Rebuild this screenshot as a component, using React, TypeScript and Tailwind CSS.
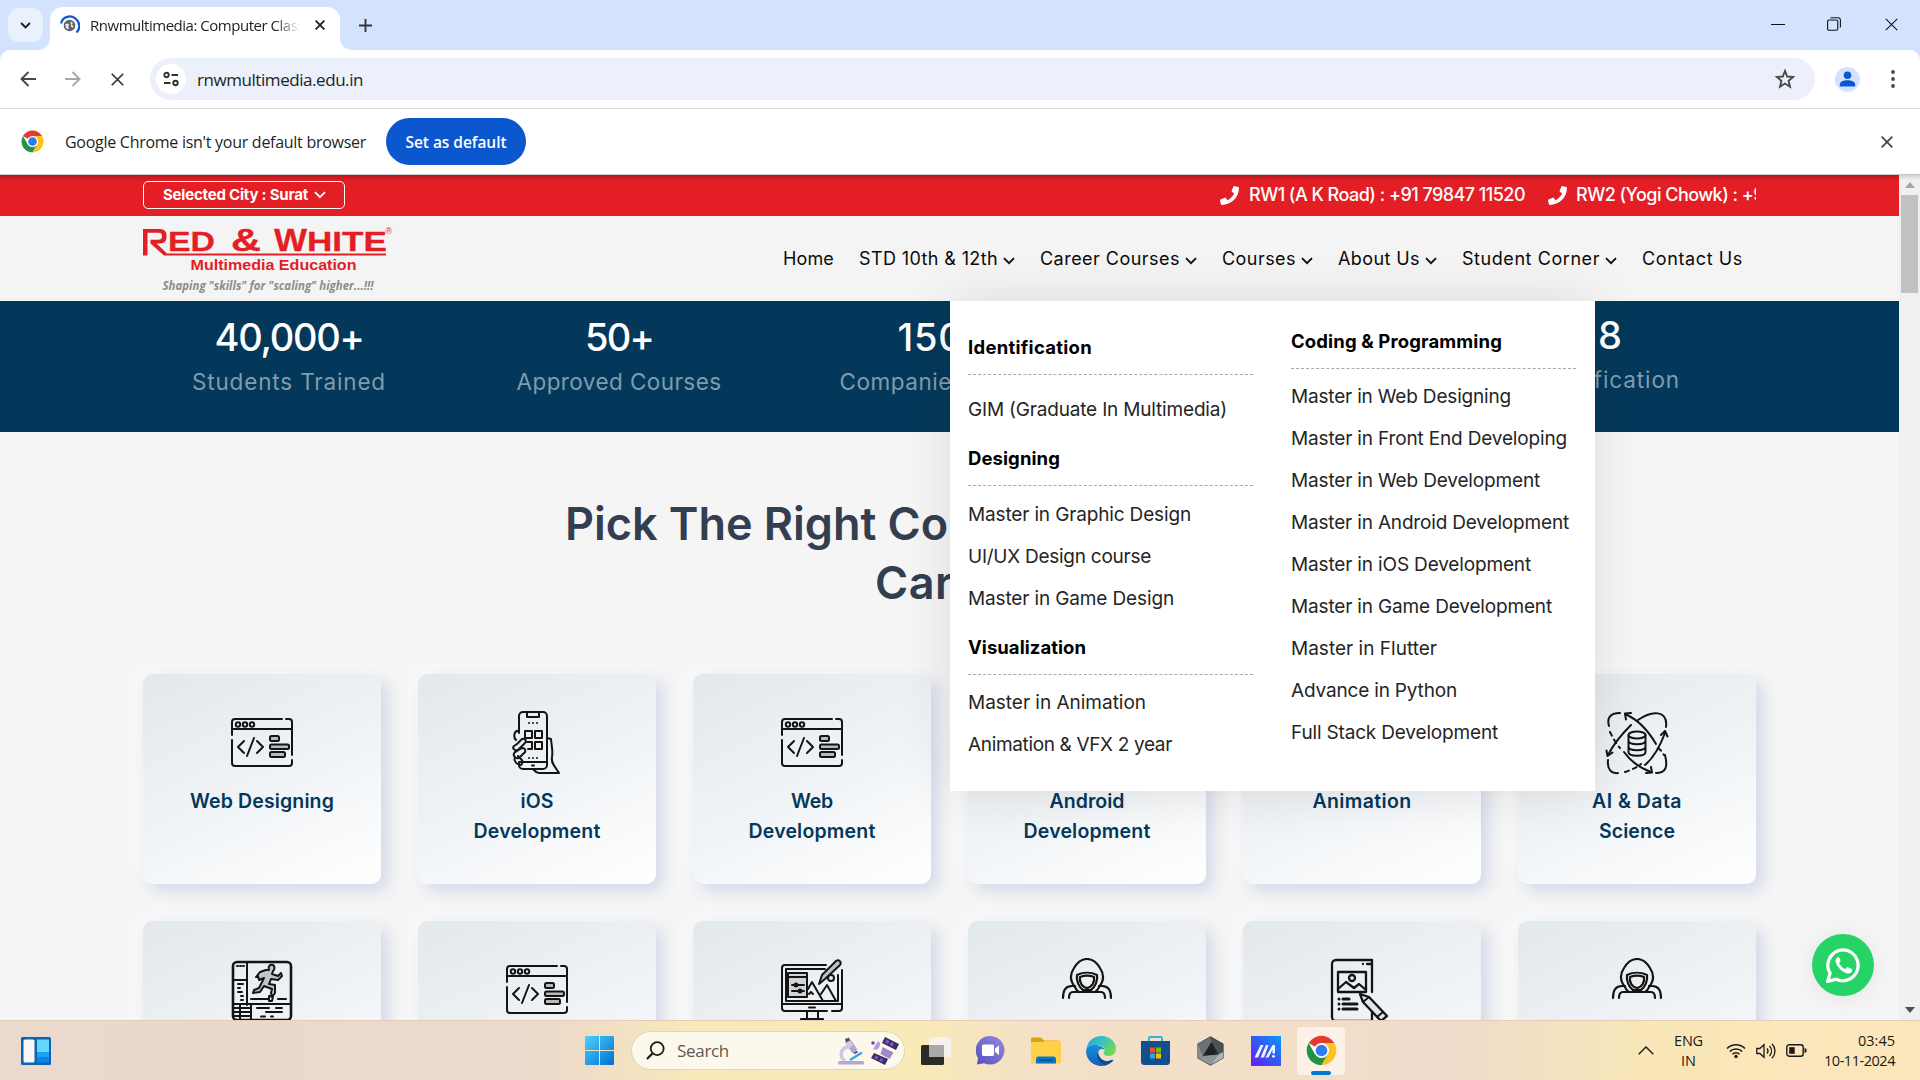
import { useLayoutEffect, useRef, type ReactNode } from "react";

/** Single line of text whose tracking is adjusted until it spans `w` pixels. */
function Fit({ w, className = "", children }: { w: number; className?: string; children: string }) {
  const ref = useRef<HTMLSpanElement>(null);
  useLayoutEffect(() => {
    const el = ref.current;
    if (!el) return;
    el.style.letterSpacing = "0px";
    const natural = el.getBoundingClientRect().width;
    el.style.letterSpacing = `${(w - natural) / children.length}px`;
  }, [w, children]);
  return (
    <span ref={ref} className={`inline-block whitespace-pre ${className}`}>
      {children}
    </span>
  );
}

const Chevron = ({ className = "" }: { className?: string }) => (
  <svg viewBox="0 0 12 8" className={className} fill="none" stroke="currentColor" strokeWidth="1.8">
    <path d="M1 1.2l5 5 5-5" />
  </svg>
);

const Cross = ({ className = "", sw = 2 }: { className?: string; sw?: number }) => (
  <svg viewBox="0 0 12 12" className={className} fill="none" stroke="currentColor" strokeWidth={sw}>
    <path d="M0.7 0.7l10.6 10.6M11.3 0.7L0.7 11.3" />
  </svg>
);

const ChromeLogo = ({ className = "" }: { className?: string }) => (
  <svg viewBox="0 0 48 48" className={className}>
    <circle cx="24" cy="24" r="23" fill="#fff" />
    <path d="M24 24L4.1 12.5A23 23 0 0 1 43.9 12.5H24z" fill="#e33b2e" />
    <path d="M4.1 12.5A23 23 0 0 0 24 47L34 29.7 24 24 14 29.7z" fill="#229342" />
    <path d="M43.9 12.5A23 23 0 0 1 24 47l10-17.3-10-17.2z" fill="#fcc31e" />
    <circle cx="24" cy="24" r="11.6" fill="#fff" />
    <circle cx="24" cy="24" r="9" fill="#2f7cf0" />
  </svg>
);

function TabStrip() {
  return (
    <div className="flex h-[50px] shrink-0 items-stretch bg-[#d3e3fd]">
      <div className="flex w-[50px] shrink-0 items-center">
        <div className="ml-2 flex h-[34px] w-[35px] items-center justify-center rounded-[11px] bg-[#e9f0fe]">
          <svg viewBox="0 0 12 8" className="h-[7px] w-[11px]" fill="none" stroke="#1f1f1f" strokeWidth="2.2">
            <path d="M1 1.2l5 5 5-5" />
          </svg>
        </div>
      </div>
      <div className="relative mt-[7px] flex w-[290px] items-center rounded-t-[13px] bg-white pb-[7px]">
        <svg viewBox="0 0 12 12" className="absolute bottom-0 -left-3 size-3">
          <path d="M12 0v12H0A12 12 0 0 0 12 0z" fill="#fff" />
        </svg>
        <svg viewBox="0 0 12 12" className="absolute -right-3 bottom-0 size-3">
          <path d="M0 0v12h12A12 12 0 0 1 0 0z" fill="#fff" />
        </svg>
        <svg viewBox="0 0 20 20" className="ml-[10px] size-5">
          <circle cx="9.5" cy="10.5" r="5.8" fill="#5f6368" />
          <path d="M5.200 9l2.600-.5 1.500 1.500-1.300 1.500 1 1.500-1 1.500-2-1.500zM10.500 6.500l2.500 1.500-1.500 2 2 .5-1 2.500-1.500-1.500z" fill="#e8eaed" />
          <path d="M1 8.500A9 9 0 0 1 16 4a9 9 0 0 1 .5 13.500" fill="none" stroke="#0b57d0" strokeWidth="2.200" />
        </svg>
        <div className="ml-[10px] w-[212px] overflow-hidden [mask-image:linear-gradient(90deg,#000_185px,transparent_210px)]">
          <Fit w={214} className="font-['Open_Sans',sans-serif] text-[15px] leading-5 text-[#1f1f1f]">
            Rnwmultimedia: Computer Class
          </Fit>
        </div>
        <Cross className="ml-[13px] size-[10px] text-[#1f1f1f]" sw={2.2} />
      </div>
      <div className="flex w-[50px] items-center justify-center">
        <svg viewBox="0 0 14 14" className="size-[13px]" stroke="#333" strokeWidth="2">
          <path d="M7 0v14M0 7h14" />
        </svg>
      </div>
      <div className="ml-auto flex items-center pb-[2px] text-[#111]">
        <svg viewBox="0 0 14 14" className="size-[14px]" stroke="currentColor">
          <path d="M0 7.5h14" />
        </svg>
        <svg viewBox="0 0 14 14" className="ml-[42px] size-[14px]" fill="none" stroke="currentColor" strokeWidth="1.1">
          <rect x=".6" y="3" width="10.200" height="10.200" rx="1.500" />
          <path d="M3.500.8h7.500a2.400 2.400 0 0 1 2.400 2.400v7.300" />
        </svg>
        <Cross className="mr-[22px] ml-[44px] size-[13px]" sw={1} />
      </div>
    </div>
  );
}

function Toolbar() {
  return (
    <div className="shrink-0 bg-[#d3e3fd]">
      <div className="flex h-[59px] items-center rounded-t-[10px] border-b border-[#dcdcdc] bg-white">
        <svg viewBox="0 0 16 16" className="ml-5 size-4" fill="none" stroke="#474747" strokeWidth="1.900">
          <path d="M8.500 1L1.500 8l7 7M1.500 8H16" />
        </svg>
        <svg viewBox="0 0 16 16" className="ml-[29px] size-4" fill="none" stroke="#a8a8a8" strokeWidth="1.900">
          <path d="M7.500 1l7 7-7 7M14.500 8H0" />
        </svg>
        <Cross className="ml-[30px] size-[13px] text-[#333]" sw={1.6} />
        <div className="ml-[26px] flex h-[42px] w-[1665px] items-center rounded-full bg-[#ebf0fa]">
          <div className="ml-[6px] flex size-[30px] items-center justify-center rounded-full bg-white">
            <svg viewBox="0 0 16 16" className="size-4" fill="none" stroke="#303030" strokeWidth="1.900">
              <circle cx="3.500" cy="4" r="2.200" />
              <path d="M8.500 4H15M1 12h6.500" />
              <circle cx="12.500" cy="12" r="2.200" />
            </svg>
          </div>
          <Fit w={166} className="ml-[11px] pt-px font-['Open_Sans',sans-serif] text-[17px] leading-6 text-[#1f1f1f]">
            rnwmultimedia.edu.in
          </Fit>
          <svg viewBox="0 0 24 24" className="mr-[19px] ml-auto size-[22px]" fill="none" stroke="#474747" strokeWidth="2">
            <path d="M12 3.200l2.400 6.100 6.500.5-5 4.200 1.600 6.400L12 16.900l-5.500 3.500 1.600-6.400-5-4.200 6.500-.5z" />
          </svg>
        </div>
        <svg viewBox="0 0 25 25" className="ml-5 size-[25px]">
          <circle cx="12.500" cy="12.500" r="12.500" fill="#d3e3fd" />
          <circle cx="12.500" cy="8.300" r="3.800" fill="#0b57d0" />
          <path d="M4.800 19.500v-2c0-3 4-4.200 7.700-4.200s7.700 1.200 7.700 4.200v2z" fill="#0b57d0" />
        </svg>
        <svg viewBox="0 0 4 18" className="ml-[31px] h-[18px] w-1" fill="#474747">
          <circle cx="2" cy="2" r="1.900" />
          <circle cx="2" cy="9" r="1.900" />
          <circle cx="2" cy="16" r="1.900" />
        </svg>
      </div>
    </div>
  );
}

function InfoBar() {
  return (
    <div className="flex h-[66px] shrink-0 items-center border-b border-[#c9c9c9] bg-white font-['Open_Sans',sans-serif]">
      <ChromeLogo className="ml-[21px] size-[23px]" />
      <Fit w={301} className="ml-[21px] text-[16px] leading-6 text-[#1f1f1f]">
        Google Chrome isn't your default browser
      </Fit>
      <div className="ml-5 flex h-[47px] w-[140px] items-center justify-center rounded-full bg-[#0b57d0]">
        <Fit w={101} className="text-[15.5px] leading-6 font-semibold text-white">
          Set as default
        </Fit>
      </div>
      <Cross className="mr-[27px] ml-auto size-[12px] text-[#444]" sw={1.700} />
    </div>
  );
}

const Phone = () => (
  <svg viewBox="0 0 512 512" className="size-[19px] shrink-0" fill="currentColor">
    <path d="M493.400 24.600l-104-24c-11.300-2.600-22.900 3.300-27.500 13.900l-48 112c-4.200 9.800-1.400 21.300 6.900 28l60.600 49.600c-36 76.700-98.900 140.500-177.200 177.200l-49.600-60.600c-6.800-8.300-18.200-11.100-28-6.900l-112 48C3.900 366.500-2 378.100.6 389.400l24 104C27.100 504.200 36.700 512 48 512c256.100 0 464-207.500 464-464 0-11.200-7.700-20.900-18.600-23.400z" />
  </svg>
);

function TopBar() {
  return (
    <div className="flex h-[41px] shrink-0 items-center bg-[#e31e25] bg-[linear-gradient(#0003,transparent_6px)] pb-px pl-[143px] text-white">
      <div className="flex h-[28px] w-[202px] items-center rounded-[5px] border border-white pl-[19px]">
        <Fit w={145} className="text-[15px] leading-5 font-bold">Selected City : Surat</Fit>
        <Chevron className="ml-[6px] h-[8px] w-[12px]" />
      </div>
      <div className="ml-[875px] flex w-[536px] items-center overflow-hidden text-[18px] leading-6 font-medium">
        <Phone />
        <Fit w={276} className="mr-[23px] ml-[10px] shrink-0">RW1 (A K Road) : +91 79847 11520</Fit>
        <Phone />
        <Fit w={188} className="ml-[9px] shrink-0">RW2 (Yogi Chowk) : +9</Fit>
      </div>
    </div>
  );
}

function Logo() {
  return (
    <svg viewBox="0 0 260 70" className="h-[70px] w-[260px]" fill="#e31e25">
      <g className="font-['Liberation_Sans',Arial,sans-serif]" stroke="#e31e25" strokeWidth=".3">
        <text x="25" y="25" fontSize="27" fontWeight="bold" textLength="47" lengthAdjust="spacingAndGlyphs">ED</text>
        <text x="88" y="25" fontSize="31" fontWeight="bold" textLength="30" lengthAdjust="spacingAndGlyphs">&amp;</text>
        <text x="131" y="25" fontSize="31" fontWeight="bold" textLength="33" lengthAdjust="spacingAndGlyphs">W</text>
        <text x="164" y="25" fontSize="27" fontWeight="bold" textLength="80" lengthAdjust="spacingAndGlyphs">HITE</text>
      </g>
      <path d="M0 3h17q6.500 0 6.500 6.500v1.500q0 6.500-6.500 6.500h-3.500l10.500 10H243v2H21L7.500 17.500v-3.800H15.500q3.500 0 3.500-3v-1q0-3-3.500-3H4.500V29.500H0z" />
      <text x="242.500" y="8" fontSize="9" className="font-['Liberation_Sans',Arial,sans-serif]">®</text>
      <text x="47.500" y="44" fontSize="14.600" fontWeight="bold" textLength="166" lengthAdjust="spacingAndGlyphs" className="font-['Liberation_Sans',Arial,sans-serif]">Multimedia Education</text>
      <text x="19.500" y="63.500" fontSize="12.500" fontWeight="700" fontStyle="italic" fill="#8c8c8c" textLength="211" lengthAdjust="spacingAndGlyphs" className="font-['Open_Sans',sans-serif]">Shaping "skills" for "scaling" higher...!!!</text>
    </svg>
  );
}

const navItems = [
  { label: "Home", w: 51, menu: false },
  { label: "STD 10th & 12th", w: 139, menu: true },
  { label: "Career Courses", w: 140, menu: true },
  { label: "Courses", w: 74, menu: true },
  { label: "About Us", w: 82, menu: true },
  { label: "Student Corner", w: 138, menu: true },
  { label: "Contact Us", w: 101, menu: false },
];

function Header() {
  return (
    <div className="flex h-[85px] shrink-0 bg-[#f4f4f4] pl-[143px]">
      <div className="mt-[10px]">
        <Logo />
      </div>
      <div className="ml-[380px] flex items-center gap-[25px] text-[18px] leading-6 text-[#0b0b0b]">
        {navItems.map((n) => (
          <div key={n.label} className="flex items-center">
            <Fit w={n.w}>{n.label}</Fit>
            {n.menu && <Chevron className="mt-[5px] ml-[5px] h-[8px] w-[12px]" />}
          </div>
        ))}
      </div>
    </div>
  );
}

function Stat({ value, vw, label, lw, raised = false }: { value: string; vw: number; label: string; lw: number; raised?: boolean }) {
  return (
    <div className={`flex w-[330px] flex-col items-center ${raised ? "pt-[14px]" : "pt-4"}`}>
      <Fit w={vw} className="text-[38px] leading-10 font-medium text-white">{value}</Fit>
      <Fit w={lw} className="mt-[10px] text-[22.5px] leading-[30px] text-[#7f9cac]">{label}</Fit>
    </div>
  );
}

function Stats() {
  return (
    <div className="flex h-[131px] shrink-0 bg-[#04385a] pl-[124px]">
      <Stat value="40,000+" vw={149} label="Students Trained" lw={194} />
      <Stat value="50+" vw={68} label="Approved Courses" lw={205} />
      <Stat value="150+ " vw={103} label="Companies Tied Up" lw={219} />
      <div className="w-[330px]" />
      <Stat value="8" vw={22} label="Certification" lw={142} raised />
    </div>
  );
}

/* ---------- Course icons, 64px grid ---------- */

const Icon = ({ children, sw = 2 }: { children: ReactNode; sw?: number }) => (
  <svg viewBox="0 0 64 64" className="size-16" fill="none" stroke="#141414" strokeWidth={sw} strokeLinejoin="round" strokeLinecap="round">
    {children}
  </svg>
);

const CodeIcon = () => (
  <Icon>
    <path d="M52 8H5a3 3 0 0 0-3 3v13M2 29v23a3 3 0 0 0 3 3h54a3 3 0 0 0 3-3v-3M62 44V11a3 3 0 0 0-3-3h-3M2 18h60" />
    <circle cx="8" cy="13.500" r="2.200" />
    <circle cx="15" cy="13.500" r="2.200" />
    <circle cx="22" cy="13.500" r="2.200" />
    <path d="M14 30l-6 6 6 6M27 30l6 6-6 6M24 27l-7 18" />
    <g fill="#b8bbbd">
      <rect x="40" y="25" width="9" height="5" rx="1.500" />
      <rect x="40" y="33.500" width="19" height="4.500" rx="1.500" />
      <rect x="40" y="41" width="15" height="5" rx="1.500" />
    </g>
  </Icon>
);

const PhoneAppIcon = () => (
  <Icon>
    <path d="M14 22V5a4 4 0 0 1 4-4h20a4 4 0 0 1 4 4v49a4 4 0 0 1-4 4H18a4 4 0 0 1-4-4v-2M14 51h28M22 1v5h12V1" />
    <path d="M20 20h7v7h-7zM30 20h7v7h-7zM30 31h7v7h-7zM23 38h4v-7h-5" />
    <path d="M24 12h0M28 12h0M32 12h0M24 47h0M28 47h0M32 47h0M27 54.500h2" />
    <path d="M14 20c-5-1-6 6-3 9M12 33l5-5c3-1 5 2 3 4l-7 7c-4 1-6-2-4-4zM12 40l5-3c4 0 4 4 2 5l-5 5c-4 1-7-3-4-6zM10 46c-2 5 3 8 6 8 2-2 2-4 0-6l-3-3" />
    <path d="M42 27l4 1c1 10 2 12 1 18-1 5 2 9 5 13l2 3H34c-3 0-4-2-6-4" />
  </Icon>
);

const DataIcon = () => (
  <Icon>
    <path d="M15 2C4 2 2 8 4 15M33 9c14-10 30-10 28 7M60 22C54 38 46 49 40 54M26 14C16 24 8 34 3 44M20 3c14 6 24 18 31 30" />
    <path d="M46 61C32 56 24 48 19 41M3 49c-1 9 3 14 10 13M60 44c3 12 1 18-9 18" />
    <path d="M2.500 45l-1-5.500M2.500 45l5-3.500M20 2.500l1 6M20 2.500l6-.5M47 61.500l-1-5.500M47 61.500l-6 .5M60 20l-4 4M60 20l2.500 5.500" />
    <path d="M5 21c3 6 6 12 10 16M20 61c6-2 11-4 16-8M53 37c3 2 4 4 6 7" strokeDasharray="4 4.500" />
    <ellipse cx="32" cy="24" rx="8.500" ry="3.500" />
    <path d="M23.500 24v17c0 5 17 5 17 0V24M23.500 29.500c0 5 17 5 17 0M23.500 35.500c0 5 17 5 17 0" />
  </Icon>
);

const AnimatorIcon = () => (
  <Icon>
    <rect x="3" y="4" width="58" height="58" rx="4" strokeWidth="2.600" />
    <path d="M17 4v43M3 22h14M3 46h58M21 46v16M3 50h18M3 54h18M3 58h18M10 46v16" />
    <path d="M7 8h1M10 8h1M13 8h1M8 26h5M8 30h2M8 34h4M11 38h2M11 42h2M21 41h17M48 41h8M27 50h12M46 50h6M36 54h16M31 58.500h4M41 58.500h2" />
    <path d="M39 12c-1-4 1-6 4-5 2 1 2 4 0 6l-1 3 6 2 3-3 1 3-4 4-7-1-2 5 6 1v8l-3 4-1-4 1-4-8-3-4 6-7 1 1-3 5-2 5-10-5 2-1-4-2 1 4-5 6-2z" fill="#c2c5c7" />
    <path d="M39 38l4 .5-1 4.500h-3z" />
  </Icon>
);

const MonitorIcon = () => (
  <Icon>
    <path d="M46 7H5a3 3 0 0 0-3 3v40a3 3 0 0 0 3 3h42M52 53h7a3 3 0 0 0 3-3V12M2 46h60M29 49.500h6M27 53v8M38 53v8M21 61h22v3H21z" />
    <path d="M45 11H6v32h52V17" />
    <path d="M8 15h19v24H8zM8 19h19M12 27h12M12 33h12" fill="#d2d5d7" />
    <circle cx="16" cy="27" r="1.500" fill="#141414" />
    <circle cx="20" cy="33" r="1.500" fill="#141414" />
    <path d="M28 31l4-7 11 19M29 36l2-2 2 2M41 36l6-9 9 16" />
    <path d="M39 26l3-9L56 3c3-2 6 1 4 4L45 21z" fill="#bfc2c4" />
    <circle cx="51" cy="20" r="3" />
  </Icon>
);

const HackerIcon = () => (
  <Icon sw={2.200}>
    <path d="M8 40c0-8 3-12 9-12h3M56 40c0-8-3-12-9-12h-3M14 40c0-4 1-6 4-6h28c3 0 4 2 4 6" />
    <path d="M20 29c-5-6-5-13-1-19C22 5 27 1 32 1s10 4 13 9c4 6 4 13-1 19" />
    <path d="M22 17c6-3 14-3 20 0 1 6-2 12-6 15h-8c-4-3-7-9-6-15z" />
    <path d="M25 19c4-1.500 10-1.500 14 0 1 5-2 10-7 11-5-1-8-6-7-11z" />
    <path d="M20 29c1 3 2 4 4 5M44 29c-1 3-2 4-4 5" />
  </Icon>
);

const DesignDocIcon = () => (
  <Icon sw={2.300}>
    <path d="M42 34V2H6a4 4 0 0 0-4 4v53a4 4 0 0 0 4 4h36V50M33 6h0M37 6h5" />
    <path d="M8 14h28v20H8z" />
    <circle cx="22" cy="20" r="3" />
    <path d="M8 31l8-7 8 6 5-4 7 6" />
    <path d="M9 41h0M13 41h6M9 46h0M13 46h14M9 51h0M13 51h14" strokeWidth="3" />
    <path d="M30 36l9 3 18 19-6 5L33 44z" fill="#e3e7ea" />
    <path d="M33 44l6-5M47 59l6-5" strokeWidth="1.800" />
  </Icon>
);

type Course = { icon: ReactNode; lines: { t: string; w: number }[] };

const topCourses: Course[] = [
  { icon: <CodeIcon />, lines: [{ t: "Web Designing", w: 144 }] },
  { icon: <PhoneAppIcon />, lines: [{ t: "iOS", w: 33 }, { t: "Development", w: 127 }] },
  { icon: <CodeIcon />, lines: [{ t: "Web", w: 42 }, { t: "Development", w: 127 }] },
  { icon: null, lines: [{ t: "Android", w: 75 }, { t: "Development", w: 127 }] },
  { icon: null, lines: [{ t: "Animation", w: 99 }] },
  { icon: <DataIcon />, lines: [{ t: "AI & Data", w: 90 }, { t: "Science", w: 76 }] },
];

const nextCourses: Course[] = [
  { icon: <AnimatorIcon />, lines: [] },
  { icon: <CodeIcon />, lines: [] },
  { icon: <MonitorIcon />, lines: [] },
  { icon: <HackerIcon />, lines: [] },
  { icon: <DesignDocIcon />, lines: [] },
  { icon: <HackerIcon />, lines: [] },
];

const Card = ({ course }: { course: Course }) => (
  <div className="flex h-[210px] flex-col items-center rounded-[10px] bg-[linear-gradient(155deg,#e2e8eb_0%,#f1f4f7_55%,#ffffff_100%)] pt-[37px] shadow-[7px_7px_16px_#d3d9e8,-7px_-7px_16px_#f9f9fa]">
    <div className="h-16">{course.icon}</div>
    <div className="mt-[11px] flex flex-col items-center text-[19.5px] leading-[30px] font-semibold text-[#04385a]">
      {course.lines.map((l) => (
        <Fit key={l.t} w={l.w}>{l.t}</Fit>
      ))}
    </div>
  </div>
);

type Entry = { t: string; w: number };

const MenuGroup = ({ title, items, gap }: { title: Entry; items: Entry[]; gap: "mb-[7px]" | "mb-2" | "mb-[14px]" }) => (
  <div className="flex w-[285px] flex-col items-start pb-px">
    <Fit w={title.w} className="text-[18.5px] leading-[53px] font-bold text-black">{title.t}</Fit>
    <div className={`w-full border-t border-dashed border-[#a9a9a9] ${gap}`} />
    {items.map((i) => (
      <Fit key={i.t} w={i.w} className="text-[19px] leading-[42px] text-[#252525]">{i.t}</Fit>
    ))}
  </div>
);

function CoursesMenu() {
  return (
    <div className="absolute top-[126px] left-[950px] z-10 flex h-[490px] w-[645px] gap-[38px] bg-white pl-[18px] shadow-[0_0_50px_#0000001a]">
      <div className="flex flex-col pt-5">
        <MenuGroup gap="mb-[14px]" title={{ t: "Identification", w: 124 }} items={[{ t: "GIM (Graduate In Multimedia)", w: 259 }]} />
        <MenuGroup
          gap="mb-2"
          title={{ t: "Designing", w: 92 }}
          items={[
            { t: "Master in Graphic Design", w: 223 },
            { t: "UI/UX Design course", w: 183 },
            { t: "Master in Game Design", w: 206 },
          ]}
        />
        <MenuGroup
          gap="mb-[7px]"
          title={{ t: "Visualization", w: 118 }}
          items={[
            { t: "Master in Animation", w: 178 },
            { t: "Animation & VFX 2 year", w: 204 },
          ]}
        />
      </div>
      <div className="pt-[14px]">
        <MenuGroup
          gap="mb-[7px]"
          title={{ t: "Coding & Programming", w: 211 }}
          items={[
            { t: "Master in Web Designing", w: 220 },
            { t: "Master in Front End Developing", w: 276 },
            { t: "Master in Web Development", w: 249 },
            { t: "Master in Android Development", w: 278 },
            { t: "Master in iOS Development", w: 240 },
            { t: "Master in Game Development", w: 261 },
            { t: "Master in Flutter", w: 146 },
            { t: "Advance in Python", w: 166 },
            { t: "Full Stack Development", w: 207 },
          ]}
        />
      </div>
    </div>
  );
}

const WhatsApp = () => (
  <div className="absolute top-[759px] left-[1812px] flex size-[62px] items-center justify-center rounded-full bg-[#25d366] shadow-[0_2px_24px_#00000012]">
    <svg viewBox="0 0 34 34" className="size-[35px]">
      <path d="M17 1.800A15 15 0 0 0 4 24.500L1.500 32.500l8.200-2.200A15 15 0 1 0 17 1.800z" fill="none" stroke="#fff" strokeWidth="3.200" />
      <path d="M11.500 9c-2 1-2.700 3.200-1.800 5.500 1.800 4.500 5.500 8.300 10.300 10 2.500.8 5-.5 5.500-2.700.2-.8 0-1.200-.5-1.500l-3.500-1.700c-.6-.3-1-.1-1.300.3l-1.200 1.600c-3-1.200-5-3.300-6.300-5.800l1.300-1.800c.2-.4.200-.7 0-1.100l-1.400-3c-.3-.5-.6-.6-1.100.2z" fill="#fff" />
    </svg>
  </div>
);

function Page() {
  return (
    <div className="relative flex h-[845px] shrink-0 overflow-hidden bg-[#f5f5f5] font-['Inter',sans-serif]">
      <div className="flex h-[845px] w-[1899px] shrink-0 flex-col overflow-hidden">
        <TopBar />
        <Header />
        <Stats />
        <div className="h-[242px] shrink-0 pt-[62px] pl-[565px] text-[45px] leading-[59px] font-semibold text-[#333e50]">
          <div className="whitespace-nowrap">
            <Fit w={383}>Pick The Right Co</Fit>urse For Your
          </div>
          <div className="pl-[310px]">
            <Fit w={150}>Career</Fit>
          </div>
        </div>
        <div className="ml-[143px] grid w-[1613px] shrink-0 grid-cols-6 gap-[37px]">
          {topCourses.map((c, i) => (
            <Card key={i} course={c} />
          ))}
          {nextCourses.map((c, i) => (
            <Card key={i} course={c} />
          ))}
        </div>
      </div>
      <div className="flex w-[21px] flex-col items-center bg-[#f0f0f0] bg-[linear-gradient(#0002,transparent_5px)] py-[7px]">
        <svg viewBox="0 0 10 6" className="h-[6px] w-[10px]" fill="#a3a3a3">
          <path d="M0 6l5-6 5 6z" />
        </svg>
        <div className="mt-[7px] h-[98px] w-[17px] bg-[#c1c1c1]" />
        <svg viewBox="0 0 10 6" className="mt-auto h-[6px] w-[10px]" fill="#505050">
          <path d="M0 0l5 6 5-6z" />
        </svg>
      </div>
      <CoursesMenu />
      <WhatsApp />
    </div>
  );
}

const StartIcon = () => (
  <svg viewBox="0 0 29 29" className="size-[29px]">
    <defs>
      <linearGradient id="win" x1="0" y1="0" x2="1" y2="1">
        <stop offset="0" stopColor="#4ed0fb" />
        <stop offset="1" stopColor="#0070d2" />
      </linearGradient>
    </defs>
    <path d="M0 1a1 1 0 0 1 1-1h13v14H0zM15 0h13a1 1 0 0 1 1 1v13H15zM0 15h14v14H1a1 1 0 0 1-1-1zM15 15h14v13a1 1 0 0 1-1 1H15z" fill="url(#win)" />
  </svg>
);

const Microscope = () => (
  <svg viewBox="0 0 28 28" className="size-7">
    <path d="M12 9.500C3 11 2 20 8 24" fill="none" stroke="#cfc7e3" strokeWidth="3.400" />
    <path d="M8 5q3-4 6-2l6 9q-1 4-5 4z" fill="#b3a3cf" />
    <path d="M8 5q3-4 5-2l3 5-4 4z" fill="#d3cbe2" />
    <path d="M8 2l4-1.500 1 3-4 2z" fill="#5c4a5c" />
    <path d="M13 23l12-7.500" stroke="#35a7ef" strokeWidth="2.500" />
    <rect x="1" y="24" width="26" height="3.500" rx="1.500" fill="#b3a9cc" />
    <path d="M17 16.500l3.500-2" stroke="#5c4a6c" strokeWidth="2" />
  </svg>
);

const Satellite = () => (
  <svg viewBox="0 0 28 28" className="size-7">
    <path d="M14 0l14 7-3 6-14-7z" fill="#3b2d5e" />
    <path d="M15.500 2.500l3 1.500-1.500 3-3-1.500zM20 5l3 1.500-1.500 3-3-1.500z" fill="#7a54d6" />
    <path d="M3 16l14 6-3 6-14-7z" fill="#3b2d5e" />
    <path d="M4.500 18.500l3 1.500-1.500 2.500-3-1.500zM9.500 21l3 1.500-1.500 2.500-3-1.500z" fill="#7a54d6" />
    <path d="M11.500 10l11 5.500-4 6.500-9-5z" fill="#a287cf" />
    <path d="M2 12c4 2 7 0 7-6L7 4z" fill="#b79ddb" />
    <circle cx="2" cy="6" r="1.800" fill="#6d4fa8" />
  </svg>
);

const TaskView = () => (
  <svg viewBox="0 0 30 28" className="h-7 w-[30px]">
    <rect x="0" y="8" width="23" height="20" rx="1.500" fill="#2b2b28" />
    <rect x="8" y="0" width="22" height="20" rx="1.500" fill="#f4f4f4" fillOpacity=".82" />
    <rect x="8" y="8" width="15" height="12" fill="#a9a9a9" />
  </svg>
);

const Chat = () => (
  <svg viewBox="0 0 29 29" className="mr-px size-[29px]">
    <defs>
      <linearGradient id="chat" x1="1" y1="0" x2="0" y2="1">
        <stop offset="0" stopColor="#9a8ae0" />
        <stop offset="1" stopColor="#5350c0" />
      </linearGradient>
    </defs>
    <path d="M14.500 0A14.300 14.300 0 1 1 8 27.200L1 28.500l1-6.500A14.300 14.300 0 0 1 14.500 0z" fill="url(#chat)" />
    <rect x="6" y="8.500" width="12" height="11.500" rx="1.500" fill="#fff" />
    <path d="M19 12.500l4-3v9.500l-4-3z" fill="#fff" />
  </svg>
);

const Folder = () => (
  <svg viewBox="0 0 30 27" className="h-[27px] w-[30px]">
    <path d="M0 2a1.500 1.500 0 0 1 1.500-1.500H10l3 3H28v8H0z" fill="#e0a008" />
    <path d="M0 5h12l1.500-1.200H28.500A1.500 1.500 0 0 1 30 5.300V25a1.500 1.500 0 0 1-1.500 1.500h-27A1.500 1.500 0 0 1 0 25z" fill="#fdd04a" />
    <path d="M5 26.500V22a2.500 2.500 0 0 1 2.500-2.500h15A2.500 2.500 0 0 1 25 22v4.500z" fill="#0b76c9" />
    <path d="M8 23.300h14" stroke="#064b86" strokeWidth="1.200" />
  </svg>
);

const Edge = () => (
  <svg viewBox="0 0 30 30" className="size-[30px]">
    <defs>
      <linearGradient id="edgeTop" x1="0" y1="0" x2="1" y2=".5">
        <stop offset="0" stopColor="#2aa4e0" />
        <stop offset=".5" stopColor="#33c0c8" />
        <stop offset="1" stopColor="#72d957" />
      </linearGradient>
      <linearGradient id="edgeLow" x1="0" y1="0" x2="0" y2="1">
        <stop offset="0" stopColor="#1a8fdc" />
        <stop offset="1" stopColor="#0f5fb4" />
      </linearGradient>
    </defs>
    <path d="M.5 13C1.500 5 8 0 15 0c9 0 15 6 15 12.500 0 5-3.500 7.500-7.500 7.500-3 0-5-1-5-2.500 0-1 1.200-1.700 1.200-3.700C18.500 11 15 9 11 9 6 9 2 11 .5 13z" fill="url(#edgeTop)" />
    <path d="M0 15c0-4 5-6.500 10.500-6 5 .5 8 3 8 5-3-2.500-6.500-.5-6.500 4 0 6 6.500 9 14 5.800l1.500.7C24.500 28 20 30 15.500 30 7 30 0 23.500 0 15z" fill="url(#edgeLow)" />
    <path d="M12 16c-2 6 1.500 12.500 8 12.800 3-1 5.500-2.500 7.500-5-7.500 3.500-14.500 0-15.500-7.800z" fill="#0c4a94" />
  </svg>
);

const Store = () => (
  <svg viewBox="0 0 29 29" className="size-[29px]">
    <path d="M8 7V2.200A1.200 1.200 0 0 1 9.200 1h10.600A1.200 1.200 0 0 1 21 2.200V7" fill="none" stroke="#2fb3ea" strokeWidth="2" />
    <path d="M0 5h29v20.500a3.500 3.500 0 0 1-3.500 3.500h-22A3.500 3.500 0 0 1 0 25.500z" fill="#134f8c" />
    <path d="M9 11.500h5v5H9z" fill="#f25022" />
    <path d="M15 11.500h5v5h-5z" fill="#7fba00" />
    <path d="M9 17.500h5v5H9z" fill="#28a8ea" />
    <path d="M15 17.500h5v5h-5z" fill="#ffb900" />
  </svg>
);

const Hex = () => (
  <svg viewBox="0 0 31 30" className="h-[30px] w-[31px]">
    <path d="M15.500 1L28 8v14l-12.500 7L3 22V8z" fill="#4c5156" stroke="#3d4145" strokeWidth="1.200" />
    <path d="M3 8l5 12-5 2z" fill="#8a8f94" />
    <path d="M3 8l12.500-7L16.500 6 8 20z" fill="#6b7075" />
    <path d="M16.500 6l7 12.500L8 20z" fill="#1f2326" />
    <path d="M8 20l15.500-1.500-8 10.500L3 22z" fill="#8f9499" />
    <path d="M23.500 18.500L28 16v6l-12.500 7z" fill="#aeb3b8" />
  </svg>
);

const MyAsus = () => (
  <svg viewBox="0 0 30 30" className="size-[30px]">
    <defs>
      <linearGradient id="asus" x1="1" y1="0" x2="0" y2="1">
        <stop offset="0" stopColor="#079bfb" />
        <stop offset=".5" stopColor="#3557f4" />
        <stop offset="1" stopColor="#6a1df2" />
      </linearGradient>
    </defs>
    <rect width="30" height="30" fill="url(#asus)" />
    <path d="M3.500 21.500L9.500 9h3L7 21.500zM9.500 21.500L15 9h2.500L13 21.500zM14.500 21.500L21.500 9H24v8.500h-2.500v-4L17.500 21.500z" fill="#eef3ff" />
    <circle cx="22.500" cy="20.300" r="1.400" fill="#fff" />
  </svg>
);

function Taskbar() {
  return (
    <div className="flex h-[60px] shrink-0 items-center border-t border-[#e2cdb6] bg-[linear-gradient(90deg,#ebd9cc_0%,#e9d8ce_9%,#ead9ce_26%,#eedcc8_30%,#f8e8ba_36%,#f9eab8_48%,#f4e0c8_54%,#f3dfc8_68%,#eedbcb_75%,#f9e7b8_86%,#fce6bc_100%)] font-['Open_Sans',sans-serif] text-[#1b1b1b]">
      <svg viewBox="0 0 30 28" className="ml-[21px] h-7 w-[30px]">
        <rect width="30" height="28" rx="1.500" fill="#0f62b0" />
        <rect x="2.500" y="2.500" width="11" height="23" rx="1.500" fill="#f8f8f8" />
        <path d="M16 2.500h12V15H16z" fill="#64d6ff" />
        <path d="M16 15h12v5H16z" fill="#1ba0f8" />
        <path d="M16 20h12v5.500H16z" fill="#0a84ea" />
      </svg>
      <div className="ml-[534px] flex items-center">
        <StartIcon />
        <div className="ml-[17px] flex h-[39px] w-[274px] items-center rounded-full border border-[#e3d5b4] bg-[#fdf8ec] pl-[14px]">
          <svg viewBox="0 0 20 20" className="size-[19px]" fill="none" stroke="#1b1b1b" strokeWidth="1.900">
            <circle cx="11.800" cy="8" r="6.800" />
            <path d="M7 13l-6 6" strokeWidth="2.300" />
          </svg>
          <Fit w={52} className="ml-3 text-[17px] leading-6 text-[#5b5a52]">Search</Fit>
          <div className="ml-auto flex gap-[6px] pr-[5px]">
            <Microscope />
            <Satellite />
          </div>
        </div>
        <div className="ml-4 flex items-center">
          <TaskView />
        </div>
        <div className="ml-[25px] flex items-center gap-[25px]">
          <Chat />
          <Folder />
          <Edge />
          <Store />
          <Hex />
          <MyAsus />
        </div>
        <div className="relative ml-4 flex size-12 items-center justify-center rounded-[4px] bg-[#fbf1e8]">
          <ChromeLogo className="size-[31px]" />
          <div className="absolute bottom-0 left-[14px] h-1 w-5 rounded-full bg-[#0078d4]" />
        </div>
      </div>
      <div className="ml-auto flex items-center">
        <svg viewBox="0 0 16 9" className="h-[9px] w-4" fill="none" stroke="currentColor" strokeWidth="1.400">
          <path d="M.7 8.300L8 1l7.300 7.300" />
        </svg>
        <div className="ml-5 flex flex-col items-center text-[14.500px] leading-[20px]">
          <Fit w={29}>ENG</Fit>
          <Fit w={15}>IN</Fit>
        </div>
        <svg viewBox="0 0 20 16" className="ml-[23px] h-4 w-5" fill="none" stroke="currentColor" strokeWidth="1.500">
          <path d="M1 5.500a12.700 12.700 0 0 1 18 0M3.800 8.500a8.700 8.700 0 0 1 12.400 0M6.500 11.300a5 5 0 0 1 7 0" />
          <circle cx="10" cy="13.500" r="1.700" fill="currentColor" stroke="none" />
        </svg>
        <svg viewBox="0 0 20 16" className="ml-[10px] h-4 w-5" fill="none" stroke="currentColor" strokeWidth="1.300">
          <path d="M.8 5.500h3L8 1.800v12.400L3.800 10.500h-3zM11 5.500c1.300 1.500 1.300 3.500 0 5M13.500 3c2.700 3 2.700 7 0 10M16 .8c4 4.300 4 10 0 14.400" />
        </svg>
        <svg viewBox="0 0 21 13" className="ml-[10px] h-[13px] w-[21px]" fill="none" stroke="currentColor" strokeWidth="1.400">
          <rect x=".8" y=".8" width="16.400" height="11.400" rx="2.500" />
          <rect x="3.200" y="3.200" width="5.500" height="6.600" fill="currentColor" stroke="none" />
          <path d="M18.500 4v5l2-1V5z" fill="currentColor" stroke="none" />
        </svg>
        <div className="mr-[25px] ml-[17px] flex flex-col items-end text-[14.500px] leading-5">
          <Fit w={37}>03:45</Fit>
          <Fit w={71}>10-11-2024</Fit>
        </div>
      </div>
    </div>
  );
}

export default function App() {
  return (
    <div className="flex h-[1080px] w-[1920px] flex-col overflow-hidden bg-white">
      <TabStrip />
      <Toolbar />
      <InfoBar />
      <Page />
      <Taskbar />
    </div>
  );
}
